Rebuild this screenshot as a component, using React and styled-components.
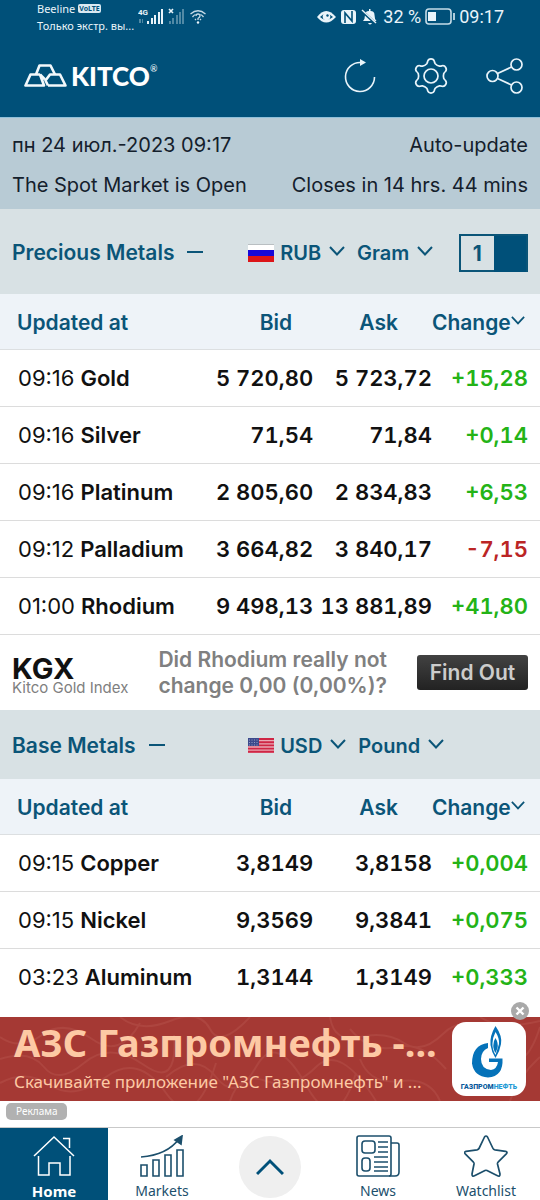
import React, { useState } from 'react';
import styled, { createGlobalStyle, css } from 'styled-components';

const GlobalStyle = createGlobalStyle`
  * {
    box-sizing: border-box;
  }

  body {
    margin: 0;
    background: #fff;
    font-family: Inter, "Liberation Sans", sans-serif;
    font-size: 20px;
    line-height: 24px;
    color: #111;
  }

  button, select {
    font: inherit;
    color: inherit;
    border: 0;
    padding: 0;
    margin: 0;
    background: none;
    cursor: pointer;
  }

  a {
    color: inherit;
    text-decoration: none;
  }

  svg {
    display: block;
    flex: none;
  }
`;

const Page = styled.div`
  display: flex;
  flex-direction: column;
  min-height: 100vh;
`;

const TopBar = styled.header`
  background: #005079;
  color: #e9f4fa;
  border-bottom: 1px solid #8fc0da;
`;

const StatusBar = styled.div`
  display: flex;
  justify-content: space-between;
  align-items: center;
  height: 34px;
  padding: 0 36px 0 37px;
  font-family: Roboto, sans-serif;
`;

const StatusGroup = styled.div`
  display: flex;
  align-items: center;
  gap: 4px;
`;

const Carrier = styled.div`
  font-family: "Noto Sans", sans-serif;
  font-size: 11px;
  line-height: 17px;
`;

const CarrierLine = styled.div`
  display: flex;
  align-items: center;
  gap: 3px;
`;

const Volte = styled.span`
  padding: 0 1px;
  border-radius: 2px;
  background: #d9e9f2;
  color: #005079;
  font-size: 7px;
  font-weight: 700;
  line-height: 9px;
`;

const Clock = styled.span`
  font-size: 18px;
`;

const AppBar = styled.div`
  display: flex;
  justify-content: space-between;
  align-items: center;
  height: 83px;
  padding: 0 17px 0 24px;
`;

const Logo = styled.a`
  display: flex;
  align-items: center;
  gap: 4px;
  color: #fff;
  font-family: Lato, sans-serif;
  font-size: 26px;
  font-weight: 900;
`;

const Registered = styled.sup`
  align-self: flex-start;
  font-size: 9px;
  font-weight: 400;
  line-height: 10px;
  margin-left: -4px;
`;

const Actions = styled.div`
  display: flex;
  align-items: center;
  gap: 37px;
`;

const MarketInfo = styled.section`
  display: flex;
  flex-direction: column;
  gap: 16px;
  padding: 15px 12px 12px;
  background: #b8cbd5;
  color: #14202c;
`;

const InfoRow = styled.div`
  display: flex;
  justify-content: space-between;
`;

const SectionHead = styled.div`
  display: grid;
  grid-template-columns: 47% 1fr auto;
  align-items: center;
  height: ${props => (props.$tall ? 85 : 69)}px;
  padding: 2px 12px 0 0;
  background: #d8e1e4;
  color: #0b5578;
  font-size: 21px;
  font-weight: 600;
`;

const Collapse = styled.button`
  display: flex;
  align-items: center;
  gap: 13px;
  padding-left: 12px;
  font-weight: 600;
`;

const Minus = styled.span`
  width: 16px;
  height: 2px;
  margin-bottom: 2px;
  background: #0b5578;
`;

const Units = styled.div`
  display: flex;
  align-items: center;
  gap: 12px;
`;

const Picker = styled.label`
  position: relative;
  display: flex;
  align-items: center;
  gap: 6px;
`;

const Select = styled.select`
  appearance: none;
  field-sizing: content;
  padding-right: 24px;
  font-size: 20px;
  font-weight: 600;
  outline: none;
`;

const PickerArrow = styled.span`
  position: absolute;
  right: 0;
  top: 5px;
  pointer-events: none;
`;

const Switch = styled.button`
  display: grid;
  grid-template-columns: 1fr 1fr;
  width: 69px;
  height: 38px;
  border: 2px solid #0b5578;
  font-weight: 700;
  line-height: 36px;

  &::after {
    content: "";
    background: #005079;
  }
`;

const Table = styled.table`
  width: 100%;
  table-layout: fixed;
  border-collapse: collapse;
`;

const Col = styled.col`
  width: ${props => props.$width}%;
`;

const Th = styled.th`
  height: 55px;
  padding: 3px ${props => props.$right || 0}px 0 ${props => props.$left || 0}px;
  background: #eef3f8;
  border-bottom: 1px solid #dcdfe1;
  color: #0b5578;
  font-size: 21px;
  font-weight: 600;
  text-align: ${props => (props.$left ? 'left' : 'right')};
`;

const Sort = styled.button`
  display: inline-flex;
  align-items: center;
  font-weight: 600;

  svg {
    margin-bottom: 4px;
  }
`;

const Row = styled.tr`
  border-bottom: 1px solid #dcdcdc;

  ${props => props.$last && css`
    border-bottom: 0;
  `}
`;

const Cell = styled.td`
  height: 57px;
  padding: 0;
  font-size: 22px;
  font-weight: 600;
  font-variant-numeric: tabular-nums;
  text-align: right;
  white-space: nowrap;
`;

const NameCell = styled(Cell)`
  padding-left: 18px;
  font-variant-numeric: normal;
  text-align: left;
`;

const Time = styled.time`
  margin-right: 6px;
  font-weight: 400;
`;

const ChangeCell = styled(Cell)`
  padding-right: 12px;
  color: ${props => (props.$down ? '#bb2525' : '#24b317')};
`;

const IndexBar = styled.section`
  display: flex;
  justify-content: space-between;
  align-items: center;
  height: 76px;
  padding: 0 12px;
  border-top: 1px solid #dcdcdc;
`;

const IndexName = styled.div`
  padding-top: 8px;
  font-size: 29px;
  font-weight: 700;
  line-height: 22px;
`;

const IndexCaption = styled.div`
  color: #808080;
  font-size: 15px;
  font-weight: 400;
  line-height: 16px;
`;

const Question = styled.p`
  margin: 0;
  color: #808080;
  font-size: 21px;
  font-weight: 600;
  line-height: 26px;
  text-align: center;
`;

const FindOut = styled.button`
  width: 111px;
  height: 35px;
  border-radius: 3px;
  background: linear-gradient(#424242, #222);
  color: #ccc;
  font-size: 21px;
  font-weight: 600;
`;

const Ad = styled.aside`
  position: relative;
  margin-top: 12px;
`;

const AdLink = styled.a`
  position: relative;
  display: flex;
  justify-content: space-between;
  align-items: center;
  height: 84px;
  padding: 0 14px;
  overflow: hidden;
  background: #a53934;
  color: #fdc9a4;
  font-family: "Noto Sans", sans-serif;
`;

const AdWaves = styled.svg`
  position: absolute;
  inset: 0;
  width: 100%;
  height: 100%;
`;

const AdText = styled.div`
  position: relative;
  white-space: nowrap;
`;

const AdTitle = styled.div`
  font-size: 38px;
  font-weight: 700;
  line-height: 44px;
`;

const AdNote = styled.div`
  padding-top: 2px;
  font-size: 17px;
  line-height: 32px;
`;

const AdTile = styled.div`
  position: relative;
  display: flex;
  justify-content: center;
  width: 74px;
  height: 74px;
  border-radius: 14px;
  background: #fff;
`;

const AdClose = styled.button`
  position: absolute;
  z-index: 1;
  top: -15px;
  right: 11px;
`;

const AdLabel = styled.span`
  display: block;
  width: fit-content;
  margin: 2px 6px 7px;
  padding: 0 10px;
  border-radius: 5px;
  background: #b1b1b1;
  color: #fff;
  font-family: "Noto Sans", sans-serif;
  font-size: 10px;
  line-height: 17px;
`;

const Nav = styled.nav`
  display: grid;
  grid-template-columns: repeat(5, 1fr);
  height: 73px;
  margin-top: auto;
  border-top: 1px solid #c9c9c9;
`;

const NavItem = styled.a`
  display: flex;
  flex-direction: column;
  align-items: center;
  gap: 4px;
  padding-top: 7px;
  color: ${props => (props.$active ? '#fff' : '#1c4f6c')};
  background: ${props => (props.$active ? '#005079' : '#fff')};
  font-family: "Noto Sans", sans-serif;
  font-size: ${props => (props.$active ? 15 : 14)}px;
  font-weight: ${props => (props.$active ? 700 : 400)};
  line-height: 20px;
`;

const UpButton = styled.button`
  display: flex;
  justify-content: center;
  align-items: center;
  width: 62px;
  height: 62px;
  margin: 8px auto 0;
  border-radius: 50%;
  background: #efefef;
`;

const precious = [
  { time: '09:16', name: 'Gold', bid: '5 720,80', ask: '5 723,72', change: '+15,28' },
  { time: '09:16', name: 'Silver', bid: '71,54', ask: '71,84', change: '+0,14' },
  { time: '09:16', name: 'Platinum', bid: '2 805,60', ask: '2 834,83', change: '+6,53' },
  { time: '09:12', name: 'Palladium', bid: '3 664,82', ask: '3 840,17', change: '-7,15' },
  { time: '01:00', name: 'Rhodium', bid: '9 498,13', ask: '13 881,89', change: '+41,80' },
];

const base = [
  { time: '09:15', name: 'Copper', bid: '3,8149', ask: '3,8158', change: '+0,004' },
  { time: '09:15', name: 'Nickel', bid: '9,3569', ask: '9,3841', change: '+0,075' },
  { time: '03:23', name: 'Aluminum', bid: '1,3144', ask: '1,3149', change: '+0,333' },
];

const polar = (r, deg) => {
  const a = (deg - 90) * Math.PI / 180;
  return `${(18 + r * Math.cos(a)).toFixed(2)} ${(18 + r * Math.sin(a)).toFixed(2)}`;
};

const gearPath = [0, 60, 120, 180, 240, 300].map((a, i) => (
  `${i ? 'L' : 'M'}${polar(13, a - 19)} Q${polar(14, a - 14)} ${polar(15, a - 13)} ` +
  `A3.5 3.3 ${a} 0 1 ${polar(15, a + 13)} Q${polar(14, a + 14)} ${polar(13, a + 19)} ` +
  `Q${polar(12, a + 30)} ${polar(13, a + 41)}`
)).join(' ') + 'Z';

const Chevron = ({ size = 16 }) => (
  <svg width={size} height={size * 10 / 16} viewBox="0 0 16 10" fill="none" stroke="#0b5578" strokeWidth="2">
    <path d="M1 1l7 7.5L15 1" />
  </svg>
);

const SignalIcons = () => (
  <svg width="68" height="20" viewBox="0 0 68 20" fill="#e9f4fa">
    <text x="0" y="8" fontFamily="Roboto, sans-serif" fontSize="8" fontWeight="700">4G</text>
    <path d="M1 12h2v4H1zM4 12h1v4H4z" opacity=".35" />
    <path d="M9 14h2v3H9zM13 11h2v6h-2zM16 8h2v9h-2zM20 5h2v12h-2zM23 2h2v15h-2z" />
    <path d="M31 2l4 4M35 2l-4 4" stroke="#e9f4fa" strokeWidth="1.6" />
    <path d="M31 14h2v3h-2zM34 11h2v6h-2zM38 8h2v9h-2zM41 5h2v12h-2zM44 2h2v15h-2z" opacity=".35" />
    <g fill="none" stroke="#c5dbe7" strokeWidth="1.3">
      <path d="M52.500 7q7.500-6.500 15 0M54.500 10q1.500-2 3-2.500M62.500 7.500q1.500.5 3 2.500M57 13l1-1M63 13l-1-1" />
      <path d="M58 9q0-2 2-2t2 2q0 1-2 2.500v1.500" />
    </g>
    <circle cx="60" cy="15.500" r="1.200" />
  </svg>
);

const StatusIcons = () => (
  <svg width="62" height="18" viewBox="0 0 62 18" fill="#e9f4fa">
    <path d="M0 9q9-12 19 0q-10 11-19 0z" />
    <path d="M3 9q6-7 13 0q-7 6-13 0z" fill="#005079" />
    <circle cx="9.500" cy="8.500" r="3.800" />
    <circle cx="10.500" cy="7.500" r="1.200" fill="#005079" />
    <rect x="24" y="2" width="15" height="14" rx="3" />
    <path d="M28 15V5l7 8V3" fill="none" stroke="#005079" strokeWidth="1.600" />
    <path d="M46 13q2-2 2-6q0-4 4-4v-2h1.500v2q4 0 4 4q0 4 2 6zM51 15h4q-2 3-4 0z" />
    <path d="M44 2l15 14" stroke="#005079" strokeWidth="3" />
    <path d="M45 2l14 13" stroke="#e9f4fa" strokeWidth="1.400" />
  </svg>
);

const Battery = () => (
  <svg width="30" height="18" viewBox="0 0 30 18" fill="none">
    <rect x="1" y="1" width="25" height="15" rx="3" stroke="#c5dbe7" strokeWidth="1.600" />
    <rect x="3" y="4" width="8" height="9" fill="#e9f4fa" />
    <path d="M29 5v7" stroke="#c5dbe7" strokeWidth="1.800" />
  </svg>
);

const Bars = () => (
  <svg width="43" height="24" viewBox="0 0 43 24" fill="none" stroke="#f2f8fb" strokeWidth="2.600" strokeLinejoin="round">
    <path d="M12 10.500L15.500 1.500h11L31 10.500" />
    <path d="M16 10.500H6.500L1.500 21.500H20L16 10.500" />
    <path d="M16 10.500l5 5" />
    <path d="M24 21.500h17.500L36 10.500H26L21.500 16.500L24 21.500" />
  </svg>
);

const RefreshIcon = () => (
  <svg width="32" height="36" viewBox="0 0 32 36" fill="none" stroke="#e9f4fa" strokeWidth="1.600">
    <path d="M17 4.500A14.500 14.500 0 1 0 30.500 19" />
    <path d="M16 1l6 3.500l-6 3.500z" fill="#e9f4fa" stroke="none" />
  </svg>
);

const GearIcon = () => (
  <svg width="36" height="36" viewBox="0 0 36 36" fill="none" stroke="#e9f4fa" strokeWidth="1.700" strokeLinejoin="round">
    <path d={gearPath} />
    <circle cx="18" cy="18" r="7" />
  </svg>
);

const ShareIcon = () => (
  <svg width="37" height="36" viewBox="0 0 37 36" fill="none" stroke="#e9f4fa" strokeWidth="1.700">
    <circle cx="6.500" cy="18" r="5.500" />
    <circle cx="30.500" cy="6.500" r="5.500" />
    <circle cx="30.500" cy="29.500" r="5.500" />
    <path d="M11.500 15.500l14-6.500M11.500 20.500l14 6.500" />
  </svg>
);

const RussianFlag = () => (
  <svg width="26" height="18" viewBox="0 0 26 18">
    <path fill="#fff" d="M0 0h26v6H0z" />
    <path fill="#1708d8" d="M0 6h26v6H0z" />
    <path fill="#dc1518" d="M0 12h26v6H0z" />
    <path d="M0 .5h26" stroke="#b9bfc2" />
  </svg>
);

const UsFlag = () => (
  <svg width="26" height="15" viewBox="0 0 26 15">
    <path fill="#e9a9b5" d="M0 0h26v15H0z" />
    <path d="M0 1h26M0 4.200h26M0 7.400h26M0 10.600h26M0 13.800h26" stroke="#cf2645" strokeWidth="1.900" />
    <path fill="#3c4a8c" d="M0 0h11v8H0z" />
    <path d="M1 2h9M1 4.500h9M1 7h9" stroke="#aab2d4" strokeWidth=".8" strokeDasharray="1 1.500" />
  </svg>
);

const Waves = () => (
  <AdWaves viewBox="0 0 540 84" preserveAspectRatio="none" fill="none" stroke="#ad453f" strokeWidth="2" aria-hidden="true">
    <path d="M0 20q20 14 42-2t50 4t48-16M0 42q30-10 44 8t40-4t60 2t30-30" />
    <path d="M0 66q26-14 50 2t56-8t60 16t50-30M120 0q20 16 50 4t40 8t40-12" />
    <path d="M166 60q30-26 50 0t40-10t50 18t50-12M230 84q10-30 36-20t50-14t60 34" />
    <path d="M330 0q4 26 30 20t44 6t40-10t50 14t46-20M350 12q20 24 46 18t50 22" />
    <path d="M440 84q-10-24-40-20t-40-22M540 40q-22 20-30 44M480 0q20 14 60 4" />
  </AdWaves>
);

const GazpromLogo = () => (
  <svg width="64" height="74" viewBox="0 0 64 74">
    <path
      fill="#0572b9"
      d="M31 21v5q-7 3-7 11q0 10 10 11q6-1 7-8h-9v-3.500h13.500q1 18-14.500 19q-14-1-16-14Q15 23 31 21z"
    />
    <path fill="#0572b9" d="M38.500 4q7 10 5.500 18q-1 7-5.500 14q-4-6-5-13q-1-9 5-19z" />
    <path fill="#fff" d="M38.500 10q4 6 3.500 12l-3.500 11q-3.500-6-3-12q0-5 3-11z" />
    <path fill="#0572b9" d="M38.500 16q3 5 2 10l-2 5q-3-5-2-9q0-3 2-6z" />
    <text
      x="32"
      y="67"
      fill="#0a5a9c"
      fontFamily="Roboto, sans-serif"
      fontSize="7"
      fontWeight="900"
      textAnchor="middle"
    >
      ГАЗПРОМ<tspan fill="#1f9ad6">НЕФТЬ</tspan>
    </text>
  </svg>
);

const HomeIcon = () => (
  <svg width="42" height="42" viewBox="0 0 42 42" fill="none" stroke="currentColor" strokeWidth="1.500">
    <path d="M1 21L21 2l20 19" />
    <path d="M30 3.500h6.500V13" />
    <path d="M5.500 21v19H16V28h11v12h10V21" />
  </svg>
);

const MarketsIcon = () => (
  <svg width="46" height="42" viewBox="0 0 46 42" fill="none" stroke="currentColor" strokeWidth="1.600">
    <path d="M2 30h6v11H2zM14 25h6v16h-6zM26 20h6v21h-6zM38 15h6v26h-6z" />
    <path d="M2 22Q28 20 40 4" />
    <path d="M43 1l-7 4l6 4z" fill="currentColor" />
  </svg>
);

const NewsIcon = () => (
  <svg width="44" height="42" viewBox="0 0 44 42" fill="none" stroke="currentColor" strokeWidth="1.600">
    <rect x="1" y="1" width="34" height="40" rx="2" />
    <path d="M35 8h6q2 0 2 2v27q0 4-4 4h-6" />
    <rect x="6" y="6" width="13" height="12" rx="3" />
    <rect x="6" y="23" width="8" height="13" rx="3" />
    <path d="M22 7h10M22 12h10M22 17h10M18 22h14M18 27h14M18 32h14M18 36h14" />
  </svg>
);

const StarIcon = () => (
  <svg width="44" height="42" viewBox="0 0 44 42" fill="none" stroke="currentColor" strokeWidth="1.700" strokeLinejoin="round">
    <path d="M20.500 2q1.500-2 3 0l5.500 11.500q.5 1 2 1.300l10.500 1.500q2.500.7.800 2.500l-8 8q-1 1-.8 2.200L36 39q0 3-2.500 1.800L23 35.500q-1-.5-2 0L10.500 40.800Q8 42 8 39l2-10q.2-1.200-.8-2.200l-8-8q-1.500-1.800.8-2.500L13 14.800q1.500-.3 2-1.300z" />
  </svg>
);

function Picking({ label, value, options, flag }) {
  const [current, setCurrent] = useState(value);
  return (
    <Picker>
      {flag}
      <Select aria-label={label} value={current} onChange={e => setCurrent(e.target.value)}>
        {options.map(option => <option key={option}>{option}</option>)}
      </Select>
      <PickerArrow><Chevron /></PickerArrow>
    </Picker>
  );
}

function MetalsTable({ label, rows }) {
  return (
    <Table aria-label={label}>
      <colgroup>
        <Col $width={37} />
        <Col $width={21} />
        <Col $width={22} />
        <Col $width={20} />
      </colgroup>
      <thead>
        <tr>
          <Th $left={17}>Updated at</Th>
          <Th $right={21}>Bid</Th>
          <Th $right={34}>Ask</Th>
          <Th $right={17}><Sort>Change<Chevron size={14} /></Sort></Th>
        </tr>
      </thead>
      <tbody>
        {rows.map((row, i) => (
          <Row key={row.name} $last={i === rows.length - 1}>
            <NameCell><Time>{row.time}</Time>{row.name}</NameCell>
            <Cell>{row.bid}</Cell>
            <Cell>{row.ask}</Cell>
            <ChangeCell $down={row.change[0] === '-'}>{row.change}</ChangeCell>
          </Row>
        ))}
      </tbody>
    </Table>
  );
}

function Header() {
  return (
    <TopBar>
      <StatusBar>
        <StatusGroup>
          <Carrier>
            <CarrierLine>Beeline <Volte>VoLTE</Volte></CarrierLine>
            <CarrierLine>Только экстр. вы...</CarrierLine>
          </Carrier>
          <SignalIcons />
        </StatusGroup>
        <StatusGroup>
          <StatusIcons />
          <Clock>32 %</Clock>
          <Battery />
          <Clock>09:17</Clock>
        </StatusGroup>
      </StatusBar>
      <AppBar>
        <Logo href="#home"><Bars />KITCO<Registered>®</Registered></Logo>
        <Actions>
          <button aria-label="Refresh"><RefreshIcon /></button>
          <button aria-label="Settings"><GearIcon /></button>
          <button aria-label="Share"><ShareIcon /></button>
        </Actions>
      </AppBar>
    </TopBar>
  );
}

function App() {
  const [single, setSingle] = useState(true);

  return (
    <Page>
      <GlobalStyle />
      <Header />
      <MarketInfo>
        <InfoRow><span>пн 24 июл.-2023 09:17</span><span>Auto-update</span></InfoRow>
        <InfoRow><span>The Spot Market is Open</span><span>Closes in 14 hrs. 44 mins</span></InfoRow>
      </MarketInfo>

      <SectionHead $tall>
        <Collapse>Precious Metals <Minus /></Collapse>
        <Units>
          <Picking label="Currency" value="RUB" options={['RUB', 'USD', 'EUR']} flag={<RussianFlag />} />
          <Picking label="Weight" value="Gram" options={['Gram', 'Ounce', 'Kilo']} />
        </Units>
        <Switch role="switch" aria-checked={single} onClick={() => setSingle(!single)}>1</Switch>
      </SectionHead>
      <MetalsTable label="Precious Metals" rows={precious} />

      <IndexBar>
        <IndexName>
          KGX
          <IndexCaption>Kitco Gold Index</IndexCaption>
        </IndexName>
        <Question>Did Rhodium really not<br />change 0,00 (0,00%)?</Question>
        <FindOut>Find Out</FindOut>
      </IndexBar>

      <SectionHead>
        <Collapse>Base Metals <Minus /></Collapse>
        <Units>
          <Picking label="Currency" value="USD" options={['USD', 'RUB', 'EUR']} flag={<UsFlag />} />
          <Picking label="Weight" value="Pound" options={['Pound', 'Kilo', 'Tonne']} />
        </Units>
      </SectionHead>
      <MetalsTable label="Base Metals" rows={base} />

      <Ad>
        <AdClose aria-label="Close">
          <svg width="18" height="18" viewBox="0 0 18 18">
            <circle cx="9" cy="9" r="9" fill="#a9a9a9" />
            <path d="M5.500 5.500l7 7M12.500 5.500l-7 7" stroke="#fff" strokeWidth="2.400" />
          </svg>
        </AdClose>
        <AdLink href="#ad">
          <Waves />
          <AdText>
            <AdTitle>АЗС Газпромнефть -...</AdTitle>
            <AdNote>Скачивайте приложение "АЗС Газпромнефть" и ...</AdNote>
          </AdText>
          <AdTile><GazpromLogo /></AdTile>
        </AdLink>
        <AdLabel>Реклама</AdLabel>
      </Ad>

      <Nav>
        <NavItem href="#home" $active><HomeIcon />Home</NavItem>
        <NavItem href="#markets"><MarketsIcon />Markets</NavItem>
        <UpButton aria-label="Scroll up">
          <svg width="28" height="18" viewBox="0 0 28 18" fill="none" stroke="#005079" strokeWidth="3">
            <path d="M1 16L14 3l13 13" />
          </svg>
        </UpButton>
        <NavItem href="#news"><NewsIcon />News</NavItem>
        <NavItem href="#watchlist"><StarIcon />Watchlist</NavItem>
      </Nav>
    </Page>
  );
}

export default App;
